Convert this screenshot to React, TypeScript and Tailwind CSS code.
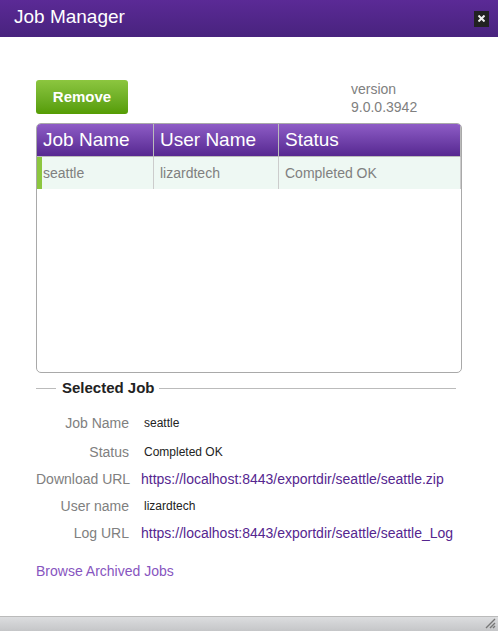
import type { ReactNode } from "react";

const jobs = [{ name: "seattle", user: "lizardtech", status: "Completed OK" }];

function Field({ label, tall, children }: { label: string; tall?: boolean; children: ReactNode }) {
  return (
    <div className={`flex items-center ${tall ? "h-[30px]" : "h-[27px]"}`}>
      <dt className="w-[93px] shrink-0 text-right whitespace-nowrap text-[#808080]">{label}</dt>
      <dd className="ml-3 min-w-0 flex-1 overflow-hidden whitespace-nowrap">{children}</dd>
    </div>
  );
}

function Value({ children }: { children: ReactNode }) {
  return <span className="block pl-[3px] text-xs text-[#222222]">{children}</span>;
}

export default function App() {
  return (
    <div className="flex min-h-screen flex-col bg-white font-['Liberation_Sans',Arial,sans-serif] text-sm leading-[18px]">
      <header className="flex h-[37px] items-center justify-between bg-linear-to-b from-[#5b2a96] to-[#48237e] pr-[9px] pb-1 pl-[14px]">
        <h1 className="text-[19px] leading-6 text-white">Job Manager</h1>
        <button
          type="button"
          aria-label="Close"
          className="mt-1 flex h-4 w-[15px] items-center justify-center bg-[#222222]"
        >
          <svg width="7" height="7" viewBox="0 0 7 7" fill="none" stroke="#eeeeee" strokeWidth="2">
            <path d="M0.5 0.5 L6.5 6.5 M6.5 0.5 L0.5 6.5" />
          </svg>
        </button>
      </header>

      <main className="flex-1 px-9 pt-[43px]">
        <div className="flex items-start justify-between">
          <button
            type="button"
            className="h-[34px] w-[92px] rounded-[3px] bg-linear-to-b from-[#8cc63f] to-[#559c02] text-[15px] font-bold text-white"
          >
            Remove
          </button>
          <p className="w-[111px] text-[#808080]">
            version
            <br />
            9.0.0.3942
          </p>
        </div>

        <div className="mt-[7px] h-[250px] overflow-hidden rounded-[5px] border border-[#a9a9a9]">
          <table className="w-full table-fixed border-separate border-spacing-0 text-left">
            <colgroup>
              <col className="w-[117px]" />
              <col className="w-[125px]" />
              <col />
            </colgroup>
            <thead>
              <tr className="h-[33px] bg-linear-to-b from-[#8e5cc6] to-[#55268f] text-[19px] leading-6 text-white">
                <th className="border-r border-b border-[#bbbbbb] pl-1.5 font-normal">Job Name</th>
                <th className="border-r border-b border-[#bbbbbb] pl-1.5 font-normal">User Name</th>
                <th className="border-r border-b border-[#bbbbbb] pl-1.5 font-normal">Status</th>
              </tr>
            </thead>
            <tbody>
              {jobs.map((job) => (
                <tr key={job.name} className="h-8 bg-[#eef8f3] text-[#808080]">
                  <td className="border-r border-l-5 border-r-[#cccccc] border-l-[#8cc63f] pl-px">{job.name}</td>
                  <td className="border-r border-[#cccccc] pl-1.5">{job.user}</td>
                  <td className="border-r border-[#cccccc] pl-1.5">{job.status}</td>
                </tr>
              ))}
            </tbody>
          </table>
        </div>

        <section className="mt-1.5 mr-1.5">
          <div className="flex items-center">
            <span className="h-px w-5 bg-[#bbbbbb]" />
            <h2 className="pr-1 pl-1.5 text-[15px] leading-[18px] font-bold text-[#222222]">Selected Job</h2>
            <span className="h-px flex-1 bg-[#bbbbbb]" />
          </div>
          <dl className="mt-[11px]">
            <Field label="Job Name" tall>
              <Value>seattle</Value>
            </Field>
            <Field label="Status">
              <Value>Completed OK</Value>
            </Field>
            <Field label="Download URL">
              <a href="https://localhost:8443/exportdir/seattle/seattle.zip" className="text-[#55268f]">
                https://localhost:8443/exportdir/seattle/seattle.zip
              </a>
            </Field>
            <Field label="User name">
              <Value>lizardtech</Value>
            </Field>
            <Field label="Log URL">
              <a href="https://localhost:8443/exportdir/seattle/seattle_Log" className="text-[#55268f]">
                https://localhost:8443/exportdir/seattle/seattle_Log
              </a>
            </Field>
          </dl>
        </section>

        <a href="#archive" className="mt-4 inline-block text-[#8755c0]">
          Browse Archived Jobs
        </a>
      </main>

      <footer className="flex h-[15px] items-end justify-end border-t border-[#bbbbbb] bg-linear-to-b from-[#dcdddf] to-[#c5c6c8] pr-0.5 pb-0.5">
        <svg width="11" height="11" viewBox="0 0 11 11" stroke="#777777" strokeWidth="1.4" fill="none" aria-hidden="true">
          <path d="M1 10 L10 1 M5 10 L10 5 M8 10 L10 8" />
        </svg>
      </footer>
    </div>
  );
}
